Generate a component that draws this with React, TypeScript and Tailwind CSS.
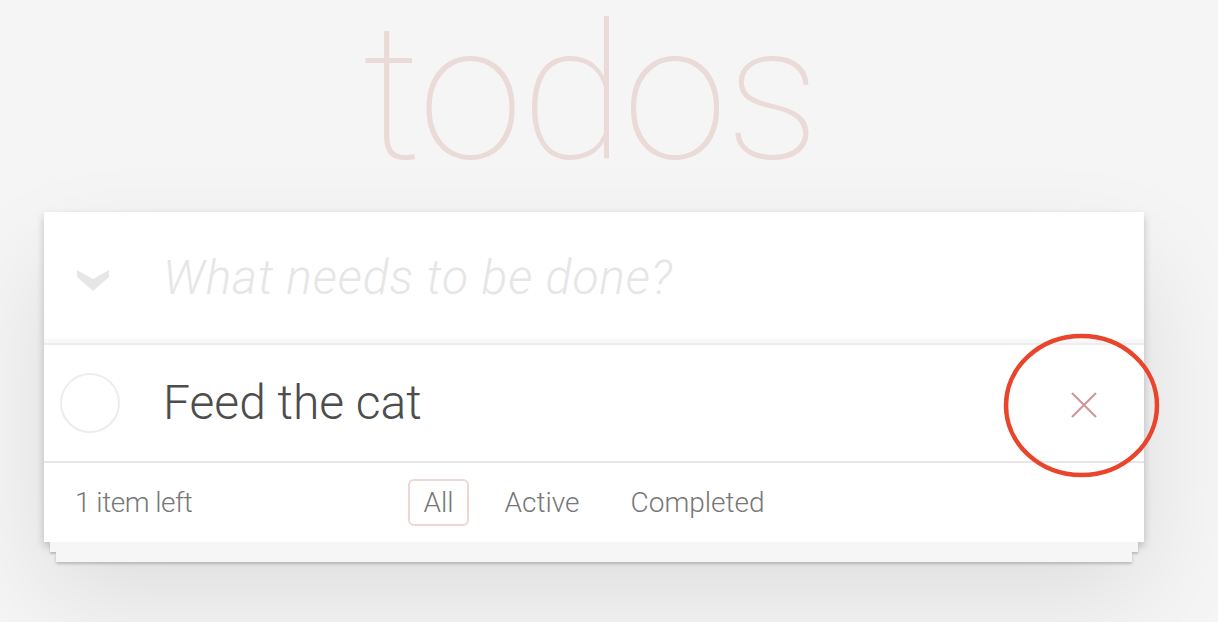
export default function App() {
  return (
    <div className="relative min-h-[622px] overflow-hidden bg-[#f5f5f5] font-['Roboto','Helvetica_Neue','Liberation_Sans',sans-serif] font-light">
      <div className="ml-[44px] w-[1100px]">
        <h1 className="flex h-[212px] items-start justify-center pr-[8px] pt-[-2px] text-[190px] leading-[190px] font-thin tracking-[-2px] text-[#eadad8]">
          <span className="-mt-[2px] block">todos</span>
        </h1>

        <section className="bg-white shadow-[0_4px_8px_rgba(0,0,0,0.2),0_50px_100px_rgba(0,0,0,0.1)]">
          <div className="flex h-[131px] items-center shadow-[inset_0_-4px_2px_rgba(0,0,0,0.03)]">
            <div className="flex w-[119px] justify-start pl-[33px]">
              <svg width="32" height="21" viewBox="0 0 32 21" className="mt-[6px]">
                <path d="M0 7 L0 0 L16 9 L32 0 L32 7 L16 21 Z" fill="#e6e6e6" />
              </svg>
            </div>
            <div className="text-[48px] italic font-light leading-none tracking-[0.9px] text-[#e6e6e6]">What needs to be done?</div>
          </div>

          <div className="flex h-[118px] items-center border-t-2 border-[#ededed]">
            <div className="flex w-[119px] justify-start pl-[16px]">
              <div className="h-[60px] w-[60px] rounded-full border-2 border-[#ededed]" />
            </div>
            <div className="flex-1 text-[48px] leading-none text-[#4d4d4d]">Feed the cat</div>
            <div className="mr-[40px] mt-[4px] flex h-[40px] w-[40px] items-center justify-center">
              <svg width="26" height="26" viewBox="0 0 26 26">
                <path d="M1 1 L25 25 M25 1 L1 25" stroke="#cc9a9a" strokeWidth="2.2" />
              </svg>
            </div>
          </div>

          <div className="grid h-[81px] grid-cols-[1fr_auto_1fr] items-center border-t-2 border-[#e6e6e6] text-[28px] text-[#777]">
            <div className="pl-[31px] tracking-[-0.5px]">1 item left</div>
            <div className="flex items-center gap-[21px]">
              <span className="rounded-[6px] border-2 border-[rgba(175,47,47,0.2)] px-[13px] py-[4px] leading-[35px]">All</span>
              <span className="rounded-[6px] border-2 border-transparent px-[13px] py-[4px] leading-[35px]">Active</span>
              <span className="rounded-[6px] border-2 border-transparent px-[13px] py-[4px] leading-[35px]">Completed</span>
            </div>
            <div />
          </div>
        </section>

        <div className="mx-[6px] h-[10px] bg-[#f6f6f6] shadow-[0_2px_2px_rgba(0,0,0,0.2)]" />
        <div className="mx-[12px] h-[10px] bg-[#f6f6f6] shadow-[0_2px_3px_rgba(0,0,0,0.2)]" />
      </div>

      <svg className="pointer-events-none absolute left-[1002px] top-[332px]" width="160" height="148" viewBox="0 0 160 148">
        <ellipse cx="79.5" cy="73.5" rx="75.5" ry="69.5" fill="none" stroke="#e9442c" strokeWidth="4.5" />
      </svg>
    </div>
  )
}
